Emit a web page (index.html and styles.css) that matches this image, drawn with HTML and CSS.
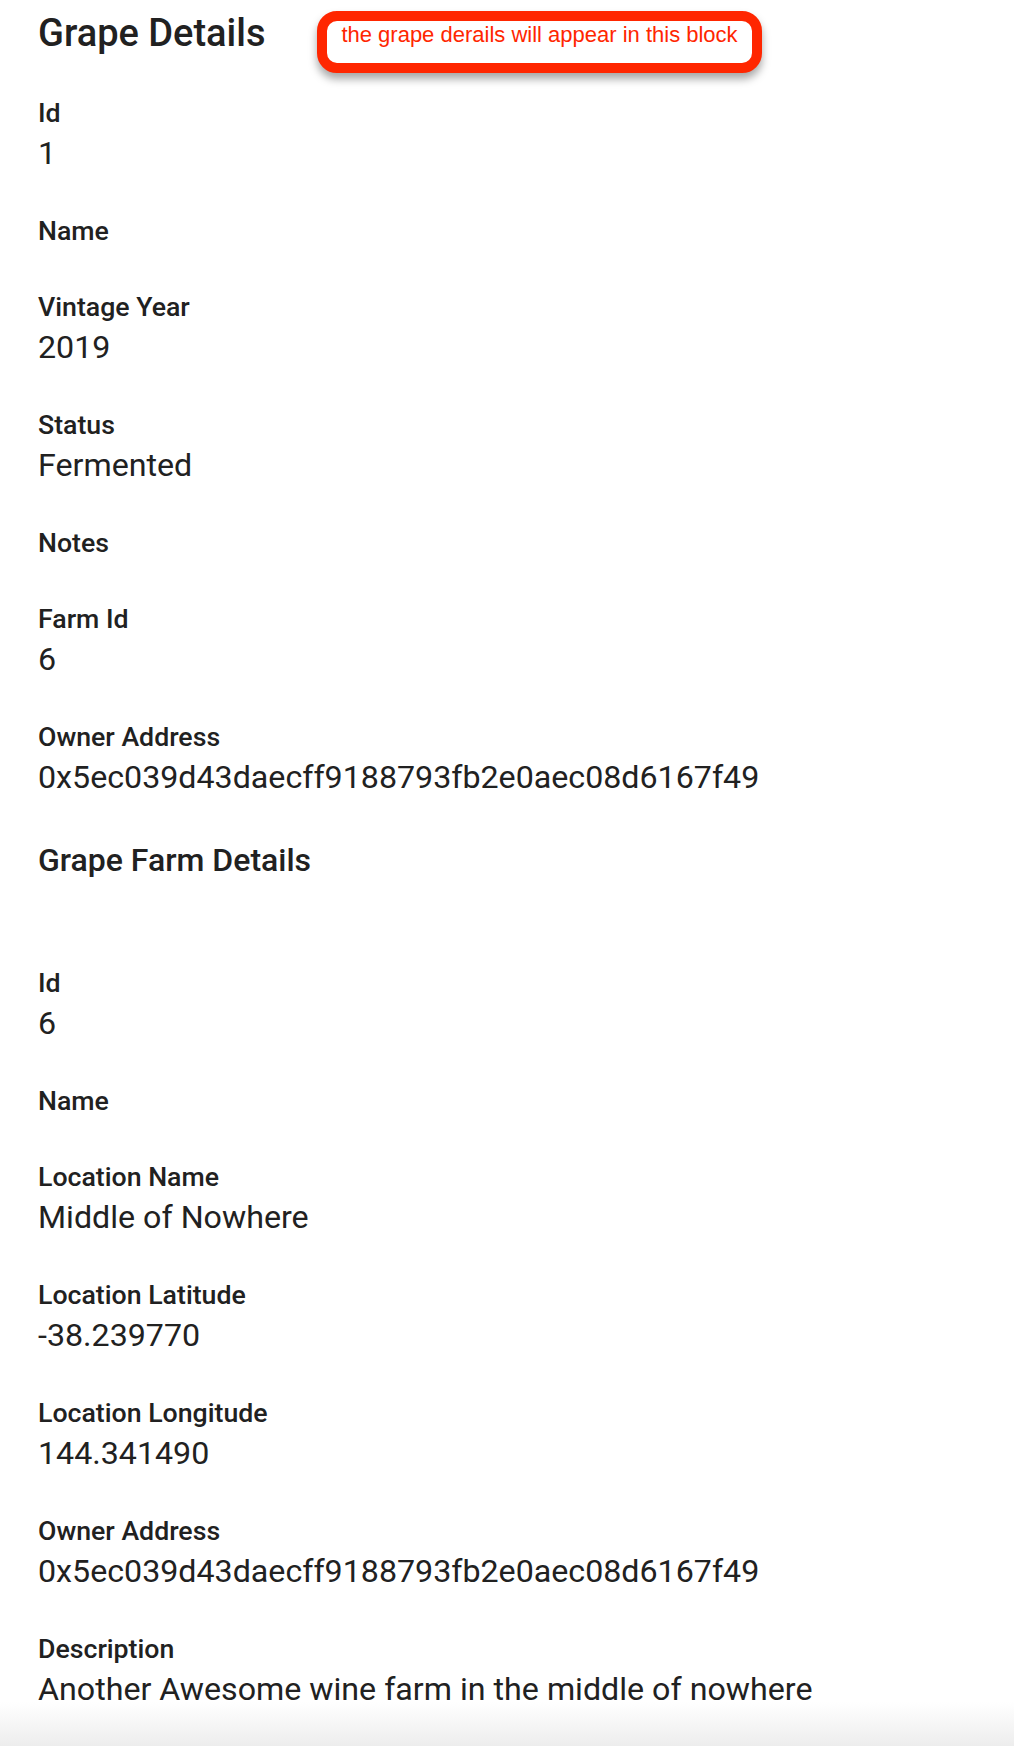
FILE: index.html
```html
<!DOCTYPE html>
<html lang="en">
<head>
<meta charset="utf-8">
<title>Grape Details</title>
<link rel="stylesheet" href="styles.css">
</head>
<body>
<main class="page">
  <header class="page-header">
    <h1 class="title">Grape Details</h1>
    <div class="callout">the grape derails will appear in this block</div>
  </header>

  <section class="details">
    <div class="field"><div class="label">Id</div><div class="value">1</div></div>
    <div class="field"><div class="label">Name</div></div>
    <div class="field"><div class="label">Vintage Year</div><div class="value">2019</div></div>
    <div class="field"><div class="label">Status</div><div class="value">Fermented</div></div>
    <div class="field"><div class="label">Notes</div></div>
    <div class="field"><div class="label">Farm Id</div><div class="value">6</div></div>
    <div class="field"><div class="label">Owner Address</div><div class="value">0x5ec039d43daecff9188793fb2e0aec08d6167f49</div></div>
  </section>

  <h2 class="subtitle">Grape Farm Details</h2>

  <section class="details">
    <div class="field"><div class="label">Id</div><div class="value">6</div></div>
    <div class="field"><div class="label">Name</div></div>
    <div class="field"><div class="label">Location Name</div><div class="value">Middle of Nowhere</div></div>
    <div class="field"><div class="label">Location Latitude</div><div class="value">-38.239770</div></div>
    <div class="field"><div class="label">Location Longitude</div><div class="value">144.341490</div></div>
    <div class="field"><div class="label">Owner Address</div><div class="value">0x5ec039d43daecff9188793fb2e0aec08d6167f49</div></div>
    <div class="field"><div class="label">Description</div><div class="value">Another Awesome wine farm in the middle of nowhere</div></div>
  </section>
</main>
</body>
</html>
```

FILE: styles.css
```css
html {
  height: 100%;
  background: linear-gradient(to bottom, #ffffff 0, #ffffff calc(100% - 44px), #ededed 100%);
}

body {
  margin: 0;
  min-height: 100%;
  font-family: Roboto, "Noto Sans", Arial, sans-serif;
  color: #212121;
}

.page {
  padding: 10px 0 0 38px;
}

.page-header {
  position: relative;
  margin-bottom: 38px;
}

.title {
  margin: 0;
  font-size: 38px;
  line-height: 46px;
  font-weight: 500;
}

.callout {
  position: absolute;
  left: 279px;
  top: 1px;
  width: 425px;
  height: 41px;
  padding-top: 1px;
  box-sizing: content-box;
  border: 10px solid #ff2600;
  border-radius: 20px;
  background: #ffffff;
  box-shadow: 0 6px 9px rgba(0, 0, 0, 0.35);
  font-family: "Liberation Sans", Arial, sans-serif;
  font-size: 22px;
  line-height: 25px;
  color: #ff2600;
  text-align: center;
}

.details {
  display: flex;
  flex-direction: column;
  gap: 38px;
}

.label {
  font-size: 26.7px;
  line-height: 38px;
  font-weight: 500;
}

.value {
  font-size: 32.2px;
  line-height: 42px;
  font-weight: 400;
}

.subtitle {
  margin: 43px 0 85px;
  font-size: 32px;
  line-height: 38px;
  font-weight: 500;
}
```
